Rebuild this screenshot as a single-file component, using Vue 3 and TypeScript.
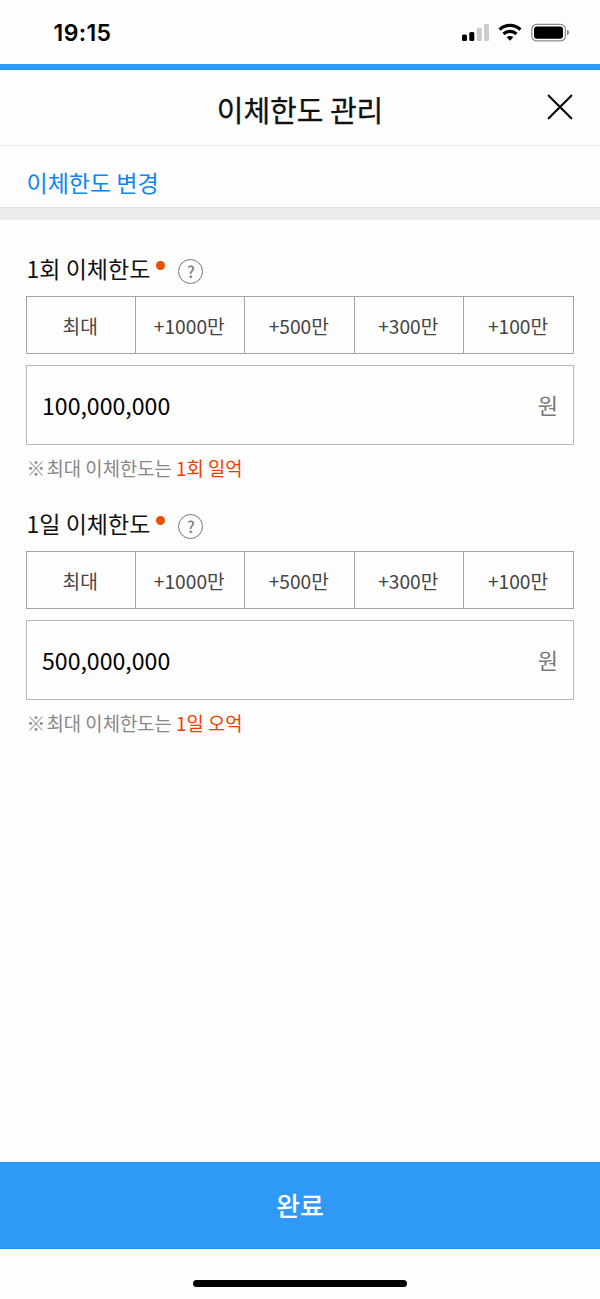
<script setup lang="ts">
interface LimitSection {
  label: string
  amount: string
  note: string
}

const chips: string[] = ['최대', '+1000만', '+500만', '+300만', '+100만']
const sections: LimitSection[] = [
  { label: '1회 이체한도', amount: '100,000,000', note: '1회 일억' },
  { label: '1일 이체한도', amount: '500,000,000', note: '1일 오억' },
]
</script>

<template>
  <div class="screen">
    <div class="status">
      <span class="time">19:15</span>
      <svg class="status-icons" width="110" height="22" viewBox="0 0 110 22">
        <rect x="2" y="14.5" width="5" height="6.5" rx="1.5" />
        <rect x="9.3" y="12" width="5" height="9" rx="1.5" />
        <rect x="16.8" y="8" width="5" height="13" rx="1.3" fill="#ccc" />
        <rect x="24" y="4" width="5" height="17" rx="1.3" fill="#ccc" />
        <g fill="none" stroke="#000" stroke-width="3.2">
          <path d="M39.6 9.6 A15 15 0 0 1 60.4 9.6" />
          <path d="M43.5 13.9 A9.4 9.4 0 0 1 56.5 13.9" />
        </g>
        <path d="M46.7 17.2 Q50 14.9 53.3 17.2 L50 20.8Z" />
        <rect x="71.8" y="4.3" width="33.6" height="16.6" rx="5" fill="none" stroke="#8c8c8c" stroke-width="1.3" />
        <rect x="74" y="6.5" width="29" height="12.2" rx="3" />
        <path d="M107 9.8 Q109.1 10.5 109.1 12.6 Q109.1 14.7 107 15.4Z" fill="#8c8c8c" />
      </svg>
    </div>
    <div class="accent"></div>
    <header class="header">
      <h1>이체한도 관리</h1>
      <button class="close" aria-label="닫기">
        <svg width="26" height="26" viewBox="0 0 26 26">
          <path d="M1.7 1.7L24.3 24.3M24.3 1.7L1.7 24.3" stroke="#000" stroke-width="2.1" stroke-linecap="round" />
        </svg>
      </button>
    </header>
    <div class="tab">이체한도 변경</div>
    <div class="band"></div>
    <main>
      <section v-for="s in sections" :key="s.label">
        <div class="label">
          <span>{{ s.label }}</span>
          <i class="dot"></i>
          <span class="help">?</span>
        </div>
        <div class="chips">
          <button v-for="c in chips" :key="c">{{ c }}</button>
        </div>
        <div class="field">
          <span class="amount">{{ s.amount }}</span>
          <span class="unit">원</span>
        </div>
        <p class="note"><span class="mark">※</span>최대 이체한도는 <em>{{ s.note }}</em></p>
      </section>
    </main>
    <button class="done">완료</button>
    <footer><div class="home"></div></footer>
  </div>
</template>

<style>
body {
  background: #fdfdfd;
}
</style>

<style scoped>
.screen {
  width: 600px;
  height: 1299px;
  display: flex;
  flex-direction: column;
  background: #fdfdfd;
  color: #111;
  font-family: "Noto Sans CJK KR", sans-serif;
  overflow: hidden;
}
button {
  font-family: inherit;
  border: 0;
  padding: 0;
  margin: 0;
  background: none;
}
.status {
  height: 64px;
  flex: none;
  display: flex;
  justify-content: space-between;
  box-sizing: border-box;
  padding: 20px 30px 0 53.5px;
}
.time {
  font: 600 23px/26px Inter, sans-serif;
  letter-spacing: 0.4px;
  color: #000;
}
.accent {
  height: 6px;
  flex: none;
  box-sizing: border-box;
  background: #2f99f7;
  border-bottom: 1px solid #2090f6;
}
.header {
  height: 76px;
  flex: none;
  box-sizing: border-box;
  border-bottom: 1px solid #ebebeb;
  display: grid;
  grid-template-columns: 60px 1fr 60px;
}
h1 {
  grid-column: 2;
  margin: 19px 0 0;
  text-align: center;
  font-size: 29px;
  line-height: 40px;
  font-weight: 400;
  -webkit-text-stroke: 0.3px currentColor;
}
.close {
  align-self: start;
  justify-self: start;
  margin: 24px 0 0 7px;
  width: 26px;
  height: 26px;
}
.close svg {
  display: block;
}
.tab {
  height: 61px;
  flex: none;
  box-sizing: border-box;
  padding: 20px 26px 0 26.5px;
  font-size: 23px;
  line-height: 33px;
  color: #0b86f5;
}
.band {
  height: 13px;
  flex: none;
  box-sizing: border-box;
  background: #ebecee;
  border-top: 1px solid #dfe0e2;
}
main {
  flex: 1;
  padding: 31px 26px 0;
}
section {
  height: 255px;
}
.label {
  height: 45px;
  display: flex;
  font-size: 23px;
  line-height: 34px;
  padding-left: 0.6px;
}
.dot {
  width: 9px;
  height: 9px;
  border-radius: 50%;
  background: #e65100;
  margin: 10px 0 0 6px;
}
.help {
  box-sizing: border-box;
  width: 25px;
  height: 25px;
  border: 1.5px solid #777;
  border-radius: 50%;
  margin: 8px 0 0 13px;
  text-align: center;
  font-size: 16px;
  line-height: 22px;
  font-weight: 500;
  color: #808080;
}
.chips {
  height: 58px;
  box-sizing: border-box;
  display: grid;
  grid-template-columns: 107.5px 109.5px 109.5px 109.5px 1fr;
  border: 1px solid #a4a4a4;
}
.chips button {
  font-size: 19.2px;
  line-height: 28px;
  padding: 2px 1px 0 0;
  color: #444;
}
.chips button + button {
  border-left: 1px solid #a4a4a4;
}
.field {
  height: 80px;
  margin-top: 11px;
  box-sizing: border-box;
  border: 1px solid #b8b8b8;
  padding: 0 15px;
  display: flex;
  justify-content: space-between;
  align-items: center;
  font-size: 23.1px;
  line-height: 34px;
}
.amount {
  color: #000;
}
.unit {
  color: #777;
  font-size: 22px;
  padding-bottom: 2px;
}
.note {
  margin: 9px 0 0;
  padding-left: 0.6px;
  font-size: 18.8px;
  line-height: 28px;
  color: #888;
}
.mark {
  display: inline-block;
  width: 20px;
}
em {
  font-style: normal;
  color: #f03c00;
}
.done {
  height: 87px;
  flex: none;
  background: #2f99f7;
  color: #fff;
  font-size: 26px;
  font-weight: 500;
  padding-bottom: 2px;
  border-top: 1px solid #2090f6;
  border-bottom: 1px solid #2090f6;
}
footer {
  height: 50px;
  flex: none;
  display: flex;
  justify-content: center;
}
.home {
  width: 214px;
  height: 7px;
  border-radius: 4px;
  background: #000;
  margin-top: 31px;
}
</style>
